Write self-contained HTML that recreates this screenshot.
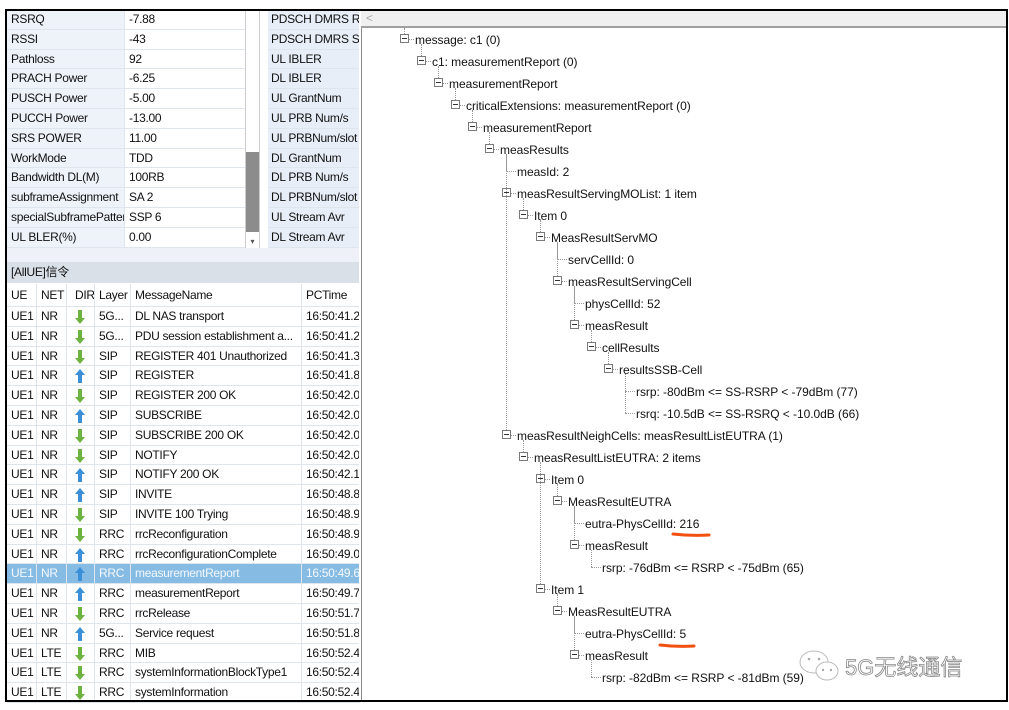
<!DOCTYPE html>
<html><head><meta charset="utf-8">
<style>
*{margin:0;padding:0;box-sizing:border-box}
body{width:1009px;height:710px;background:#fff;position:relative;overflow:hidden;font-family:"Liberation Sans","Noto Sans CJK SC",sans-serif;font-size:12px;color:#111}
.a{position:absolute;white-space:nowrap}
.frame{position:absolute;left:5px;top:9px;width:1003px;height:693px;border:2px solid #000}
.tr{position:absolute;height:20px;line-height:20px;font-size:12px;letter-spacing:-0.3px}
.c{position:absolute;top:0;height:100%;padding-left:4px;overflow:hidden;white-space:nowrap;border-right:1px solid #dfe5ec;border-bottom:1px solid #dfe5ec}
.n{position:absolute;height:18px;line-height:18px;font-size:12px;letter-spacing:-0.05px;white-space:nowrap}
.bx{position:absolute;width:9px;height:9px;border:1px solid #7a7a7a;background:#fff}
.bx:after{content:"";position:absolute;left:1px;top:3px;width:5px;height:1px;background:#333}
.hl{position:absolute;height:0;border-top:1px dotted #999}
.vl{position:absolute;width:0;border-left:1px dotted #999}
</style></head><body>

<div id="top"></div>
<div class="a" style="left:245px;top:10px;width:15px;height:240px;background:#fff;border:1px solid #ccc"></div>
<div class="a" style="left:246px;top:152px;width:13px;height:80px;background:#8c8c8c"></div>
<div class="a" style="left:246px;top:234px;width:13px;height:15px;font-size:8px;text-align:center;line-height:15px;color:#555">▾</div>
<div class="a" style="left:7px;top:248px;width:353px;height:14px;background:#eef2f8"></div>
<div class="a" style="left:7px;top:262px;width:353px;height:21px;background:#d9e0e8;line-height:21px;padding-left:4px;font-size:12px;letter-spacing:-0.3px">[AllUE]信令</div>

<div id="list"></div>

<div class="a" style="left:360px;top:10px;width:648px;height:18px;background:#f0f0f0;border-bottom:2px solid #a0a0a0;color:#aaa;font-size:12px;line-height:17px;padding-left:6px">&lt;</div>
<div class="a" style="left:361px;top:28px;width:1px;height:673px;background:#888"></div>
<div class="a" style="left:359px;top:10px;width:2px;height:691px;background:#fff"></div>

<div id="tree">
<div class="n" style="left:415px;top:31px">message: c1 (0)</div>
<div class="n" style="left:432px;top:53px">c1: measurementReport (0)</div>
<div class="n" style="left:449px;top:75px">measurementReport</div>
<div class="n" style="left:466px;top:97px">criticalExtensions: measurementReport (0)</div>
<div class="n" style="left:483px;top:119px">measurementReport</div>
<div class="n" style="left:500px;top:141px">measResults</div>
<div class="n" style="left:517px;top:163px">measId: 2</div>
<div class="n" style="left:517px;top:185px">measResultServingMOList: 1 item</div>
<div class="n" style="left:534px;top:207px">Item 0</div>
<div class="n" style="left:551px;top:229px">MeasResultServMO</div>
<div class="n" style="left:568px;top:251px">servCellId: 0</div>
<div class="n" style="left:568px;top:273px">measResultServingCell</div>
<div class="n" style="left:585px;top:295px">physCellId: 52</div>
<div class="n" style="left:585px;top:317px">measResult</div>
<div class="n" style="left:602px;top:339px">cellResults</div>
<div class="n" style="left:619px;top:361px">resultsSSB-Cell</div>
<div class="n" style="left:636px;top:383px">rsrp: -80dBm &lt;= SS-RSRP &lt; -79dBm (77)</div>
<div class="n" style="left:636px;top:405px">rsrq: -10.5dB &lt;= SS-RSRQ &lt; -10.0dB (66)</div>
<div class="n" style="left:517px;top:427px">measResultNeighCells: measResultListEUTRA (1)</div>
<div class="n" style="left:534px;top:449px">measResultListEUTRA: 2 items</div>
<div class="n" style="left:551px;top:471px">Item 0</div>
<div class="n" style="left:568px;top:493px">MeasResultEUTRA</div>
<div class="n" style="left:585px;top:515px">eutra-PhysCellId: 216</div>
<div class="n" style="left:585px;top:537px">measResult</div>
<div class="n" style="left:602px;top:559px">rsrp: -76dBm &lt;= RSRP &lt; -75dBm (65)</div>
<div class="n" style="left:551px;top:581px">Item 1</div>
<div class="n" style="left:568px;top:603px">MeasResultEUTRA</div>
<div class="n" style="left:585px;top:625px">eutra-PhysCellId: 5</div>
<div class="n" style="left:585px;top:647px">measResult</div>
<div class="n" style="left:602px;top:669px">rsrp: -82dBm &lt;= RSRP &lt; -81dBm (59)</div>
</div>

<svg class="a" style="left:0;top:0" width="1009" height="710">
<path d="M673 534 Q690 536 709 535" stroke="#f25010" stroke-width="3" fill="none" stroke-linecap="round"/>
<path d="M660 645 Q676 647 694 646" stroke="#f25010" stroke-width="3" fill="none" stroke-linecap="round"/>
<ellipse cx="814" cy="662" rx="14" ry="11" fill="#fff" stroke="#bbb" stroke-width="1"/>
<ellipse cx="827" cy="671" rx="11" ry="9" fill="#fff" stroke="#bbb" stroke-width="1"/>
<circle cx="809" cy="659" r="1.3" fill="#aaa"/><circle cx="819" cy="659" r="1.3" fill="#aaa"/>
<circle cx="823" cy="670" r="1.2" fill="#aaa"/><circle cx="831" cy="670" r="1.2" fill="#aaa"/>
</svg>
<div class="a" style="left:845px;top:650px;font-size:22px;color:#fff;-webkit-text-stroke:0.8px #888">5G无线通信</div>

<div class="frame"></div>

<script>
(function(){
var top=[["RSRQ","-7.88","PDSCH DMRS RS"],["RSSI","-43","PDSCH DMRS SII"],["Pathloss","92","UL IBLER"],["PRACH Power","-6.25","DL IBLER"],["PUSCH Power","-5.00","UL GrantNum"],["PUCCH Power","-13.00","UL PRB Num/s"],["SRS POWER","11.00","UL PRBNum/slot"],["WorkMode","TDD","DL GrantNum"],["Bandwidth DL(M)","100RB","DL PRB Num/s"],["subframeAssignment","SA 2","DL PRBNum/slot"],["specialSubframePattern","SSP 6","UL Stream Avr"],["UL BLER(%)","0.00","DL Stream Avr"],["","",""]];
var h="";
top.forEach(function(r,i){
 var y=10+i*19.8;
 h+='<div class="tr" style="left:7px;top:'+y+'px;width:353px;height:19.8px;line-height:19.8px">'+
 '<div class="c" style="left:0;width:118px;background:#eef3fa">'+r[0]+'</div>'+
 '<div class="c" style="left:118px;width:126px;background:#fff">'+r[1]+'</div>'+
 '<div class="c" style="left:261px;width:92px;background:#e8eef7;padding-left:3px">'+r[2]+'</div></div>';
});
document.getElementById("top").innerHTML=h;
var L=[["UE","NET","DIR","Layer","MessageName","PCTime"],
["UE1","NR","d","5G...","DL NAS transport","16:50:41.2"],
["UE1","NR","d","5G...","PDU session establishment a...","16:50:41.2"],
["UE1","NR","d","SIP","REGISTER 401 Unauthorized","16:50:41.3"],
["UE1","NR","u","SIP","REGISTER","16:50:41.8"],
["UE1","NR","d","SIP","REGISTER 200 OK","16:50:42.0"],
["UE1","NR","u","SIP","SUBSCRIBE","16:50:42.0"],
["UE1","NR","d","SIP","SUBSCRIBE 200 OK","16:50:42.0"],
["UE1","NR","d","SIP","NOTIFY","16:50:42.0"],
["UE1","NR","u","SIP","NOTIFY 200 OK","16:50:42.1"],
["UE1","NR","u","SIP","INVITE","16:50:48.8"],
["UE1","NR","d","SIP","INVITE 100 Trying","16:50:48.9"],
["UE1","NR","d","RRC","rrcReconfiguration","16:50:48.9"],
["UE1","NR","u","RRC","rrcReconfigurationComplete","16:50:49.0"],
["UE1","NR","u","RRC","measurementReport","16:50:49.6"],
["UE1","NR","u","RRC","measurementReport","16:50:49.7"],
["UE1","NR","d","RRC","rrcRelease","16:50:51.7"],
["UE1","NR","u","5G...","Service request","16:50:51.8"],
["UE1","LTE","d","RRC","MIB","16:50:52.4"],
["UE1","LTE","d","RRC","systemInformationBlockType1","16:50:52.4"],
["UE1","LTE","d","RRC","systemInformation","16:50:52.4"]];
var cx=[0,30,60,88,124,295],cw=[30,30,28,36,171,58];
var dn='<svg width="10" height="14" viewBox="0 0 10 14" style="margin-top:3px"><path d="M3 0h4v8h3l-5 6-5-6h3z" fill="#6cb33f"/></svg>';
var up='<svg width="10" height="14" viewBox="0 0 10 14" style="margin-top:3px"><path d="M5 0l5 6h-3v8h-4v-8h-3z" fill="#3a8fd8"/></svg>';
h="";
L.forEach(function(r,i){
 var y=i==0?284:307+(i-1)*19.8, ht=i==0?23:19.8;
 var sel=(i==14);
 h+='<div class="tr" style="left:7px;top:'+y+'px;width:353px;height:'+ht+'px;line-height:'+ht+'px;background:'+(sel?'#86bce4':'#fff')+';color:'+(sel?'#f4f8fc':'#111')+'">';
 for(var k=0;k<6;k++){
  var t=r[k];
  if(i>0&&k==2) t=(t=="d"?dn:up);
  h+='<div class="c" style="left:'+cx[k]+'px;width:'+cw[k]+'px;padding-left:'+(k==2?8:4)+'px">'+t+'</div>';
 }
 h+='</div>';
});
document.getElementById("list").innerHTML=h;
var N=[[0,39,1],[1,61,1],[2,83,1],[3,105,1],[4,127,1],[5,149,1],[6,171,0],[6,193,1],[7,215,1],[8,237,1],[9,259,0],[9,281,1],[10,303,0],[10,325,1],[11,347,1],[12,369,1],[13,391,0],[13,413,0],[6,435,1],[7,457,1],[8,479,1],[9,501,1],[10,523,0],[10,545,1],[11,567,0],[8,589,1],[9,611,1],[10,633,0],[10,655,1],[11,677,0]];
h="";
N.forEach(function(n,i){
 var bx=400+17*n[0],y=n[1];
 if(n[2]) h+='<div class="bx" style="left:'+bx+'px;top:'+(y-5)+'px"></div><div class="hl" style="left:'+(bx+9)+'px;top:'+y+'px;width:5px"></div>';
 else h+='<div class="hl" style="left:'+(bx+4)+'px;top:'+y+'px;width:10px"></div>';
 var p=-1;for(var j=i-1;j>=0;j--){if(N[j][0]<n[0]){p=j;break;}}
 var py=p>=0?N[p][1]+5:28;
 h+='<div class="vl" style="left:'+(bx+4)+'px;top:'+py+'px;height:'+(y-py-(n[2]?5:0))+'px"></div>';
});
document.getElementById("tree").insertAdjacentHTML("afterbegin",h);
})();
</script>
</body></html>
